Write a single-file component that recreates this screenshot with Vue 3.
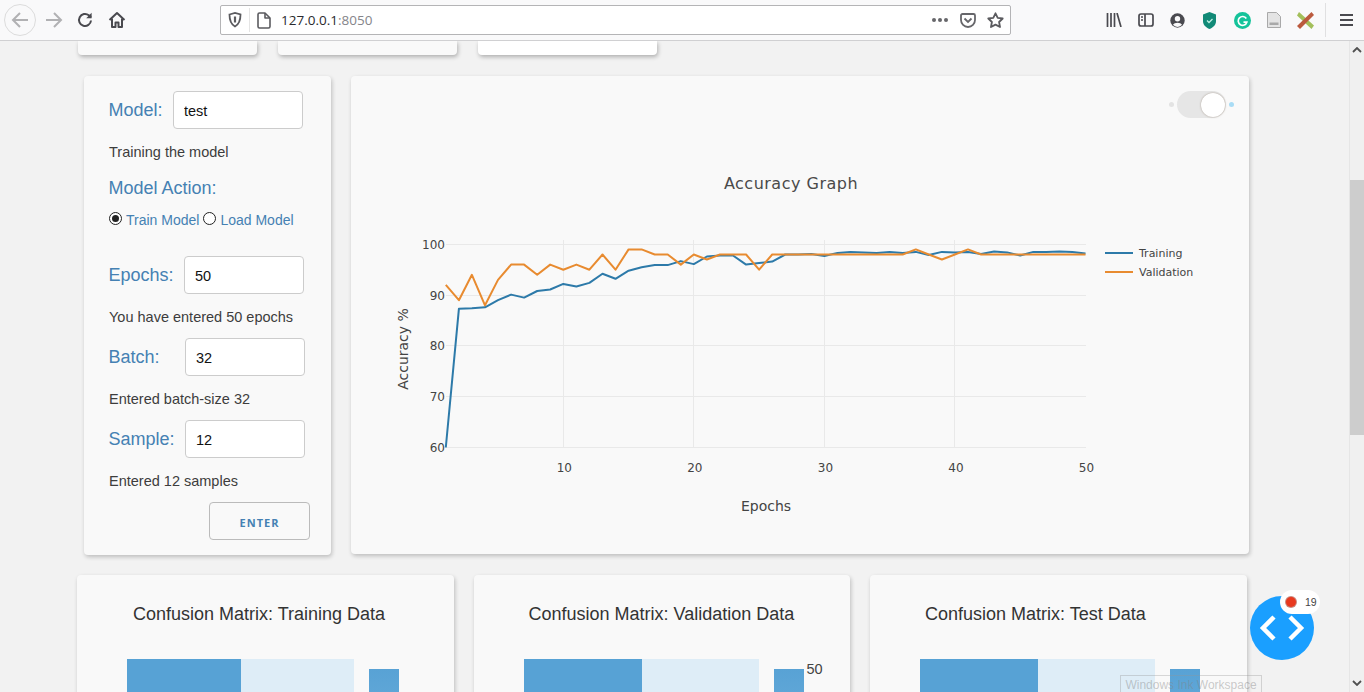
<script setup>
const train = [60,87.3,87.4,87.6,89,90.1,89.5,90.8,91.1,92.2,91.7,92.4,94.2,93.2,94.8,95.5,95.9,95.9,96.7,96.1,97.6,97.8,97.8,96,96.3,96.6,98,98,98.1,97.7,98.3,98.5,98.4,98.3,98.5,98.3,98.5,97.9,98.5,98.4,98.5,98.1,98.6,98.4,97.8,98.5,98.5,98.6,98.5,98.2]
const valid = [92,89,94,88,93,96,96,94,96,95,96,95,98,95,99,99,98,98,96,98,97,98,98,98,95,98,98,98,98,98,98,98,98,98,98,98,99,98,97,98,99,98,98,98,98,98,98,98,98,98]
const X = (n) => 563.3 + (n - 10) * 13.055
const Y = (v) => 244.3 + (100 - v) * 5.08
const snap = (v) => Math.floor(v) + 0.5
const pts = (a) => a.map((v, i) => `${X(i + 1).toFixed(1)},${Y(v).toFixed(1)}`).join(' ')
const trainPts = pts(train)
const validPts = pts(valid)
const xTicks = [10, 20, 30, 40, 50]
const yTicks = [100, 90, 80, 70, 60]
const matrices = [
  { title: 'Confusion Matrix: Training Data', tick: '', dark: 114, light: 113 },
  { title: 'Confusion Matrix: Validation Data', tick: '50', dark: 118, light: 117 },
  { title: 'Confusion Matrix: Test Data', tick: '', dark: 118, light: 117 }
]
</script>

<template>
  <div class="window">
    <header class="toolbar">
      <div class="nav">
        <span class="back">
          <svg width="20" height="20" viewBox="0 0 20 20" fill="none" stroke="#b1b1b3" stroke-width="2"><path d="M18 10H3M10 3l-7 7 7 7"/></svg>
        </span>
        <svg class="fwd" width="20" height="20" viewBox="0 0 20 20" fill="none" stroke="#b1b1b3" stroke-width="2"><path d="M2 10h15M10 3l7 7-7 7"/></svg>
        <svg class="reload" width="18" height="18" viewBox="0 0 18 18" fill="none" stroke="#4a4a4f" stroke-width="2"><path d="M15 9.5A6 6 0 1 1 12.8 4.3L15 6.5"/><path d="M15.6 1.8v5.4h-5.4" fill="#4a4a4f" stroke="none"/></svg>
        <svg class="home" width="18" height="18" viewBox="0 0 18 18" fill="none" stroke="#4a4a4f" stroke-width="2" stroke-linejoin="round"><path d="M1.5 9 9 2l7.5 7"/><path d="M4 7.5V16h3.5v-4.5h3V16H14V7.5"/></svg>
      </div>
      <div class="urlbar">
        <svg class="shield" width="14" height="16" viewBox="0 0 14 16" fill="none" stroke="#5b5b5f" stroke-width="1.8"><path d="M1.5 2.5 7 1l5.500 1.500c0 6-1 9.500-5.500 12C2.500 12 1.500 8.500 1.500 2.500z"/><path d="M7 4.500v6" stroke-width="2.200"/></svg>
        <span class="sep"></span>
        <svg class="page-ic" width="14" height="17" viewBox="0 0 14 17" fill="none" stroke="#5b5b5f" stroke-width="1.600" stroke-linejoin="round"><path d="M1 2.500A1.500 1.500 0 0 1 2.500 1H8l5 5v8.500a1.500 1.500 0 0 1-1.500 1.500h-9A1.500 1.500 0 0 1 1 14.500z"/><path d="M8 1v5h5"/></svg>
        <span class="url">127.0.0.1<span class="port">:8050</span></span>
        <span class="url-right">
          <svg width="18" height="6" viewBox="0 0 18 6" fill="#66666a"><circle cx="3" cy="3" r="2"/><circle cx="9" cy="3" r="2"/><circle cx="15" cy="3" r="2"/></svg>
          <svg width="16" height="15" viewBox="0 0 16 15" fill="none" stroke="#66666a" stroke-width="1.800"><path d="M1 2.500A1.500 1.500 0 0 1 2.500 1h11A1.500 1.500 0 0 1 15 2.500V7A7 7 0 0 1 1 7z"/><path d="M4.500 5.500 8 9l3.500-3.500"/></svg>
          <svg width="17" height="16" viewBox="0 0 17 16" fill="none" stroke="#5b5b5f" stroke-width="1.800" stroke-linejoin="round"><path d="M8.500 1.300 10.700 5.800l5 .7-3.600 3.500.9 5-4.500-2.400L4 15l.9-5L1.300 6.500l5-.7z"/></svg>
        </span>
      </div>
      <div class="tools">
        <svg class="t1" width="16" height="14" viewBox="0 0 16 14" fill="none" stroke="#4a4a4f" stroke-width="1.700"><path d="M1.500 0v14M5 0v14M8.500 0v14M11 0l4 14"/></svg>
        <svg class="t2" width="16" height="14" viewBox="0 0 16 14" fill="none" stroke="#4a4a4f" stroke-width="1.700"><rect x="1" y="1" width="14" height="12" rx="2"/><path d="M7 1v12M3 4h2M3 7h2"/></svg>
        <svg class="t3" width="15" height="15" viewBox="0 0 15 15"><circle cx="7.500" cy="7.500" r="7.200" fill="#4a4a4f"/><circle cx="7.500" cy="5.800" r="2.700" fill="#f9f9fa"/><path d="M2.900 11.800a5 3.500 0 0 1 9.200 0A6 6 0 0 1 2.900 11.800z" fill="#f9f9fa"/></svg>
        <svg class="t4" width="13" height="17" viewBox="0 0 13 17"><path d="M6.500 0 13 2.500V9c0 4-3 6.500-6.500 8C3 15.500 0 13 0 9V2.500z" fill="#128a77"/><path d="M4 8.500 6 10.500 9.500 7" fill="none" stroke="#bff0e4" stroke-width="1.300"/></svg>
        <svg class="t5" width="17" height="17" viewBox="0 0 17 17"><circle cx="8.500" cy="8.500" r="8.500" fill="#15c39a"/><path d="M12.300 6.500A4.400 4.400 0 1 0 12.800 10.200H9.500" fill="none" stroke="#fff" stroke-width="1.700"/></svg>
        <svg class="t6" width="14" height="16" viewBox="0 0 14 16"><path d="M.5.500h9l4 4v11H.5z" fill="#e4e4e4" stroke="#a9a9a9"/><rect x="2.500" y="10.500" width="9" height="2.500" fill="#a9a9a9"/></svg>
        <svg class="t7" width="17" height="17" viewBox="0 0 17 17"><path d="M2 0 17 13.500 14.500 17 0 3.500z" fill="#a3bf5a"/><path d="M14.500 0 17 3 3 17 0 14z" fill="#bb5a3e"/></svg>
        <span class="t-sep"></span>
        <svg class="t8" width="13" height="12" viewBox="0 0 13 12" fill="none" stroke="#4a4a4f" stroke-width="2"><path d="M0 1h13M0 6h13M0 11h13"/></svg>
      </div>
    </header>

    <div class="body">
      <main class="page">
        <section class="top-row">
          <div class="stub"></div>
          <div class="stub"></div>
          <div class="stub white"></div>
        </section>

        <section class="panel-row">
          <aside class="card form">
            <div class="row">
              <label class="lbl l-model">Model:</label>
              <input class="inp w130" value="test" />
            </div>
            <p class="note first">Training the model</p>
            <div class="lbl action">Model Action:</div>
            <div class="radios">
              <span class="radio on"></span><span class="rlabel">Train Model</span>
              <span class="radio"></span><span class="rlabel">Load Model</span>
            </div>
            <div class="row epochs">
              <label class="lbl l-epochs">Epochs:</label>
              <input class="inp" value="50" />
            </div>
            <p class="note">You have entered 50 epochs</p>
            <div class="row">
              <label class="lbl l-batch">Batch:</label>
              <input class="inp" value="32" />
            </div>
            <p class="note">Entered batch-size 32</p>
            <div class="row">
              <label class="lbl l-batch">Sample:</label>
              <input class="inp" value="12" />
            </div>
            <p class="note">Entered 12 samples</p>
            <button class="enter">ENTER</button>
          </aside>

          <article class="card chart">
            <div class="toggle">
              <i class="dot d1"></i>
              <span class="track"><span class="knob"></span></span>
              <i class="dot d2"></i>
            </div>
            <svg class="plot" width="898" height="478" viewBox="351 76 898 478">
              <text x="791" y="189" class="title" text-anchor="middle">Accuracy Graph</text>
              <line v-for="t in yTicks" :key="'h' + t" x1="446" x2="1086" :y1="snap(Y(t))" :y2="snap(Y(t))" class="grid" />
              <line v-for="t in xTicks.slice(0, 4)" :key="'v' + t" :x1="snap(X(t))" :x2="snap(X(t))" y1="240" y2="447.500" class="grid" />
              <text v-for="t in yTicks" :key="'yl' + t" x="445" :y="Y(t) + 4.5" text-anchor="end" class="tick">{{ t }}</text>
              <text v-for="t in xTicks" :key="'xl' + t" :x="X(t) + 1" y="472" text-anchor="middle" class="tick">{{ t }}</text>
              <polyline :points="trainPts" class="ln blue" />
              <polyline :points="validPts" class="ln orange" />
              <text x="766" y="511" text-anchor="middle" class="axis">Epochs</text>
              <text transform="translate(408 349) rotate(-90)" text-anchor="middle" class="axis">Accuracy %</text>
              <line x1="1105" x2="1133" y1="253" y2="253" class="ln blue" />
              <line x1="1105" x2="1133" y1="272" y2="272" class="ln orange" />
              <text x="1139" y="257" class="legend">Training</text>
              <text x="1139" y="276" class="legend">Validation</text>
            </svg>
          </article>
        </section>

        <section class="matrix-row">
          <article v-for="m in matrices" :key="m.title" class="card matrix">
            <h3>{{ m.title }}</h3>
            <div class="heat">
              <div class="cell dark" :style="{ width: m.dark + 'px' }"></div>
              <div class="cell light" :style="{ width: m.light + 'px' }"></div>
              <div class="bar"></div>
              <span v-if="m.tick" class="bar-tick">{{ m.tick }}</span>
            </div>
          </article>
        </section>
      </main>

      <div class="scrollbar">
        <svg class="arr" width="10" height="6" viewBox="0 0 10 6" fill="none" stroke="#505050" stroke-width="1.800"><path d="M1 5l4-4 4 4"/></svg>
        <div class="thumb"></div>
        <svg class="arr" width="10" height="6" viewBox="0 0 10 6" fill="none" stroke="#505050" stroke-width="1.800"><path d="M1 1l4 4 4-4"/></svg>
      </div>

      <div class="fab">
        <svg width="46" height="30" viewBox="0 0 46 30" fill="none" stroke="#fff" stroke-width="4.500"><path d="M15 4 4 15 15 26M31 4l11 11L31 26"/></svg>
        <div class="badge"><i class="rec"></i><span>19</span></div>
      </div>
      <div class="ink">Windows Ink Workspace</div>
    </div>
  </div>
</template>

<style>
html, body { margin: 0; overflow: hidden; background: #f2f2f2; }
</style>

<style scoped>
.window { width: 1364px; height: 692px; display: flex; flex-direction: column; overflow: hidden; font-family: "Liberation Sans", Arial, sans-serif; color: #3d3d3d; }
.toolbar { height: 40px; flex: none; display: flex; align-items: center; background: #f9f9fa; border-bottom: 1px solid #d0d0d2; position: relative; z-index: 2; }
.nav { width: 220px; flex: none; display: flex; align-items: center; height: 40px; }
.back { width: 32px; height: 32px; margin-left: 4px; border: 1px solid #dcdcdc; border-radius: 50%; box-sizing: border-box; display: flex; align-items: center; justify-content: center; }
.fwd { margin-left: 8px; }
.reload { margin-left: 12px; }
.home { margin-left: 14px; }
.urlbar { width: 791px; height: 30px; box-sizing: border-box; flex: none; display: flex; align-items: center; background: #fff; border: 1px solid #b4b4b6; border-radius: 2px; }
.shield { margin-left: 7px; }
.sep { width: 1px; height: 24px; background: #e5e5e5; margin-left: 7px; }
.page-ic { margin-left: 7px; }
.url { margin-left: 10px; font-family: "Open Sans", sans-serif; font-size: 13.500px; color: #2a2a2e; }
.port { color: #85858a; }
.url-right { margin-left: auto; display: flex; align-items: center; gap: 11px; padding-right: 6px; }
.tools { flex: 1; display: flex; align-items: center; height: 40px; position: relative; }
.tools svg { position: absolute; }
.t1 { left: 95px; }
.t2 { left: 127px; }
.t3 { left: 159px; }
.t4 { left: 192px; }
.t5 { left: 223px; }
.t6 { left: 256px; }
.t7 { left: 286px; }
.t-sep { position: absolute; left: 314px; top: 3px; width: 1px; height: 34px; background: #e0e0e1; }
.t8 { left: 329px; }

.body { flex: 1; display: flex; position: relative; min-height: 0; }
.page { flex: 1; min-width: 0; height: 651px; overflow: hidden; background: #f2f2f2; }
.card { background: #f9f9f9; border-radius: 4px; box-shadow: 1px 2px 4px rgba(0, 0, 0, .22); }

.top-row { height: 14px; display: flex; gap: 21px; padding-left: 78px; }
.stub { width: 179px; height: 14px; background: #f9f9f9; border-radius: 0 0 4px 4px; box-shadow: 1px 2px 4px rgba(0, 0, 0, .28); }
.stub.white { background: #fff; }

.panel-row { display: flex; gap: 20px; margin: 21px 0 0 84px; }
.form { width: 247px; height: 479px; box-sizing: border-box; padding: 15px 0 0 25px; }
.row { display: flex; align-items: center; height: 38px; }
.lbl { font-size: 18px; color: #4581b3; margin-left: -0.500px; }
.l-model { width: 64.500px; }
.l-epochs { width: 75.500px; }
.l-batch { width: 76.500px; }
.inp { width: 120px; height: 38px; box-sizing: border-box; border: 1px solid #ccc; border-radius: 4px; padding: 2px 10px 0; background: #fff; font: 14.500px "Liberation Sans", Arial, sans-serif; color: #111; outline: none; }
.w130 { width: 130px; }
.note { margin: 12px 0; height: 20px; line-height: 22px; font-size: 14.500px; color: #3d3d3d; }
.note.first { margin: 13px 0 0; line-height: 20px; }
.action { margin-top: 15px; height: 22px; line-height: 22px; }
.radios { margin-top: 11px; height: 20px; display: flex; align-items: center; font-size: 14px; color: #4581b3; }
.radio { width: 13px; height: 13px; box-sizing: border-box; border: 1px solid #222; border-radius: 50%; background: #fff; position: relative; margin-top: -3px; }
.radio.on::after { content: ""; position: absolute; inset: 2px; background: #222; border-radius: 50%; }
.rlabel { margin: 0 4px 0 4px; }
.epochs { margin-top: 26px; }
.enter { display: block; margin-left: 100px; width: 101px; height: 38px; box-sizing: border-box; background: transparent; border: 1px solid #bbb; border-radius: 4px; font: bold 11px "Open Sans", sans-serif; letter-spacing: 1px; color: #4581b3; padding: 2px 0 0; }

.chart { width: 898px; height: 478px; position: relative; }
.plot { display: block; }
.title { font: 16px "DejaVu Sans", sans-serif; letter-spacing: .5px; fill: #4a4a4a; }
.grid { stroke: #e9e9e9; stroke-width: 1; }
.tick { font: 12px "DejaVu Sans", sans-serif; fill: #444; }
.axis { font: 14px "DejaVu Sans", sans-serif; fill: #444; }
.legend { font: 11px "DejaVu Sans", sans-serif; fill: #444; }
.ln { fill: none; stroke-width: 2; stroke-linejoin: round; }
.blue { stroke: #2d7aa9; }
.orange { stroke: #e88b30; }
.toggle { position: absolute; top: 15px; right: 15px; display: flex; align-items: center; }
.track { width: 49px; height: 27px; border-radius: 14px; background: #e6e6e6; position: relative; margin: 0 3px; }
.knob { position: absolute; right: 1px; top: 1.500px; width: 24px; height: 24px; background: #fff; border-radius: 50%; box-shadow: 0 0 2px rgba(120, 100, 80, .6); }
.dot { width: 5px; height: 5px; border-radius: 50%; }
.d1 { background: #e3e3e3; }
.d2 { background: #a9dcf5; }

.matrix-row { display: flex; gap: 20px; margin: 20px 0 0 77px; }
.matrix { width: 376.500px; height: 300px; padding: 29px 0 0 50px; box-sizing: border-box; }
.matrix h3 { margin: 0 0 0 5px; height: 20px; line-height: 20px; font-size: 18px; font-weight: 400; color: #333; }
.matrix:first-child h3 { margin-left: 6px; }
.heat { display: flex; margin-top: 35px; position: relative; }
.cell { height: 120px; }
.dark { background: #57a2d5; }
.light { background: #deedf7; }
.bar { width: 30px; height: 110px; margin: 10px 0 0 15px; background: linear-gradient(#58a2d5, #74b4dd); }
.bar-tick { position: absolute; left: 283px; top: 2px; font-size: 14.500px; color: #444; }

.scrollbar { width: 15px; flex: none; height: 651px; background: #f0f0f0; border-left: 1px solid #e6e6e6; box-sizing: border-box; position: relative; display: flex; flex-direction: column; align-items: center; justify-content: space-between; padding: 6px 0; }
.thumb { position: absolute; top: 139px; left: 0; width: 14px; height: 255px; background: #cdcdcd; }
.arr { position: relative; }

.fab { position: absolute; left: 1250px; top: 555px; width: 64px; height: 64px; border-radius: 50%; background: #1a9fff; display: flex; align-items: center; justify-content: center; }
.badge { position: absolute; left: 30px; top: -6px; width: 40px; height: 24px; border-radius: 12px; background: #fff; display: flex; align-items: center; font-size: 10.500px; color: #444; }
.rec { width: 10px; height: 10px; margin: 0 9px 0 6px; border-radius: 50%; background: #e8391f; box-shadow: 0 0 0 1px #c98a80; }
.ink { position: absolute; left: 1120px; top: 634px; width: 142px; height: 20px; box-sizing: border-box; border: 1px solid rgba(150, 150, 150, .35); font-size: 12px; line-height: 18px; text-align: center; color: rgba(130, 130, 130, .42); }
</style>
